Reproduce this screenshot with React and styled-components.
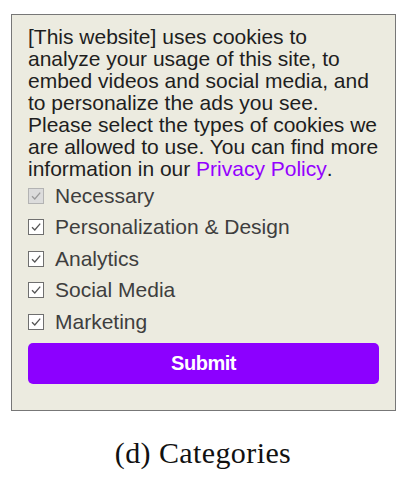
import React from "react";
import styled, { createGlobalStyle } from "styled-components";

const Global = createGlobalStyle`
  html, body { margin: 0; padding: 0; background: #ffffff; }
  body { width: 406px; height: 486px; overflow: hidden; }
`;

const Page = styled.div`
  display: flex;
  flex-direction: column;
  align-items: center;
  padding-top: 14px;
`;

const Panel = styled.div`
  box-sizing: border-box;
  width: 385px;
  height: 397px;
  margin-left: 1px;
  background: #ecebe0;
  border: 1px solid #777777;
  padding: 11px 15px 0 16px;
  font-family: "Liberation Sans", Arial, sans-serif;
`;

const Intro = styled.p`
  margin: 0;
  font-size: 21px;
  line-height: 22px;
  color: #1e1e1e;
`;

const Link = styled.a`
  display: inline-block;
  line-height: 22px;
  color: #9400ff;
  text-decoration: none;
`;

const List = styled.div`
  display: flex;
  flex-direction: column;
  margin-top: 0;
`;

const Row = styled.label`
  display: flex;
  align-items: center;
  height: 31.5px;
  gap: 11px;
  font-size: 21px;
  color: #3e3e3e;
`;

const Box = styled.span`
  box-sizing: border-box;
  width: 16px;
  height: 16px;
  flex: none;
  border: 1px solid ${(p) => (p.$disabled ? "#b3b3b3" : "#6f6f6f")};
  background: ${(p) => (p.$disabled ? "#dcdcdc" : "#ffffff")};
  display: flex;
  align-items: center;
  justify-content: center;
`;

const Button = styled.button`
  display: block;
  width: 351px;
  height: 41px;
  margin-top: 5px;
  border: none;
  border-radius: 5px;
  background: #8c00ff;
  color: #ffffff;
  font-family: "Liberation Sans", Arial, sans-serif;
  font-weight: bold;
  font-size: 20px;
  letter-spacing: -0.5px;
`;

const Caption = styled.div`
  margin-top: 25px;
  font-family: "Liberation Serif", "DejaVu Serif", serif;
  font-size: 30px;
  letter-spacing: 0.4px;
  color: #111111;
`;

const Check = ({ disabled }) => (
  <Box $disabled={disabled}>
    <svg width="12" height="12" viewBox="0 0 12 12">
      <path
        d="M2 6.2 L4.8 9 L10.2 2.6"
        fill="none"
        stroke={disabled ? "#9a9a9a" : "#555555"}
        strokeWidth="1.3"
      />
    </svg>
  </Box>
);

const items = [
  { label: "Necessary", disabled: true },
  { label: "Personalization & Design" },
  { label: "Analytics" },
  { label: "Social Media" },
  { label: "Marketing" },
];

export default function App() {
  return (
    <>
      <Global />
      <Page>
        <Panel>
          <Intro>
            [This website] uses cookies to analyze your usage of this site, to
            embed videos and social media, and to personalize the ads you see.
            Please select the types of cookies we are allowed to use. You can
            find more information in our <Link href="#">Privacy Policy</Link>.
          </Intro>
          <List>
            {items.map((it) => (
              <Row key={it.label}>
                <Check disabled={it.disabled} />
                {it.label}
              </Row>
            ))}
          </List>
          <Button>Submit</Button>
        </Panel>
        <Caption>(d) Categories</Caption>
      </Page>
    </>
  );
}
